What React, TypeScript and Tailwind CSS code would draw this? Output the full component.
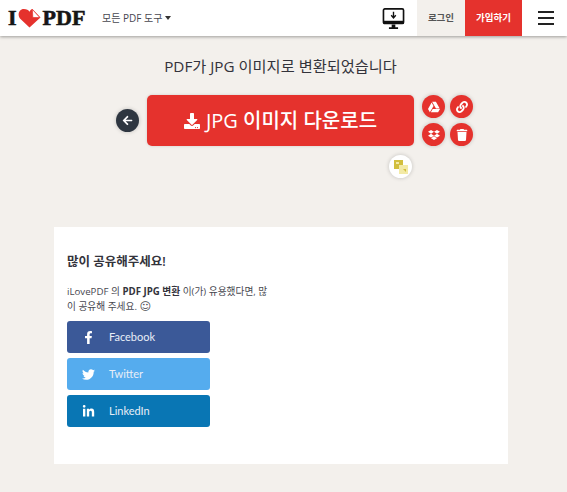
import { FaArrowLeft, FaDownload, FaDropbox, FaFacebookF, FaGoogleDrive, FaLink, FaLinkedinIn, FaTrash, FaTwitter } from "react-icons/fa";
import type { ReactNode } from "react";

const sans = "font-['Open_Sans','Noto_Sans_CJK_KR',sans-serif]";

function Logo() {
  return (
    <div className="flex w-[78px] items-center font-['Liberation_Serif',serif] text-[22px] font-bold leading-none text-[#161616] [-webkit-text-stroke:0.6px_#161616]">
      <span>I</span>
      <svg width="23" height="20" viewBox="0 0 24 21" className="ml-[1px] mr-[2px]">
        <path d="M12 20.5 L2 11 C-1 7 1 1 6 1 C9 1 11 2 12 4 C13 2 14 1 15 1 L23.5 10 L12 20.5 Z" fill="#e5322d" />
        <path d="M15 1.5 L22.8 10 L15.5 10 Z" fill="#fff" stroke="#e5322d" strokeWidth="0.7" />
      </svg>
      <span>PDF</span>
    </div>
  );
}

function RoundButton({ children, className }: { children: ReactNode; className: string }) {
  return (
    <div className={`flex h-[23px] w-[23px] items-center justify-center rounded-full text-white shadow-[0_0_4px_rgba(0,0,0,0.2)] ${className}`}>
      {children}
    </div>
  );
}

function ShareButton({ icon, label, className }: { icon: ReactNode; label: string; className: string }) {
  return (
    <div className={`flex h-[32px] w-[143px] items-center rounded-[3px] ${className}`}>
      <span className="flex w-[42px] justify-center text-[13px] text-white">{icon}</span>
      <span className="font-['Lato',sans-serif] text-[11px] text-[#e8eef7]">{label}</span>
    </div>
  );
}

export default function App() {
  return (
    <div className={`flex h-[492px] w-[567px] flex-col overflow-hidden bg-[#f3f0ec] ${sans}`}>
      <header className="flex h-[36px] shrink-0 items-center bg-white pl-[8px] shadow-[0_1px_3px_rgba(0,0,0,0.35)]">
        <Logo />
        <div className="ml-[16px] flex items-center gap-[3px] text-[10px] text-[#47474f]">
          <span>모든 PDF 도구</span>
          <span className="h-0 w-0 border-x-[3px] border-t-[4px] border-x-transparent border-t-[#333]" />
        </div>
        <svg width="23" height="21" viewBox="0 0 24 23" className="ml-auto mr-[12px]">
          <rect x="1" y="1" width="22" height="16" rx="1.5" fill="#fff" stroke="#111" strokeWidth="1.8" />
          <rect x="1" y="14" width="22" height="3.5" fill="#111" />
          <path d="M12 4 V10 M9.5 8 L12 10.8 L14.5 8" fill="none" stroke="#111" strokeWidth="1.5" />
          <path d="M10 18 H14 V21 H17 V23 H7 V21 H10 Z" fill="#111" />
        </svg>
        <div className="flex h-full w-[48px] items-center justify-center bg-[#f3f0ec] text-[9.5px] font-semibold text-[#555]">
          로그인
        </div>
        <div className="flex h-full w-[57px] items-center justify-center bg-[#e5322d] text-[9.5px] font-semibold text-white">
          가입하기
        </div>
        <div className="flex w-[45px] flex-col items-center gap-[4.5px] pl-[3px]">
          <span className="h-[1.5px] w-[16px] bg-[#222]" />
          <span className="h-[1.5px] w-[16px] bg-[#222]" />
          <span className="h-[1.5px] w-[16px] bg-[#222]" />
        </div>
      </header>

      <h1 className="mt-[19px] pr-[6px] text-center text-[15.25px] font-normal leading-[22px] text-[#33333b]">
        PDF가 JPG 이미지로 변환되었습니다
      </h1>

      <div className="ml-[116px] mt-[18px] flex items-center">
        <RoundButton className="bg-[#2e3640] text-[11px]">
          <FaArrowLeft />
        </RoundButton>
        <div className="ml-[8px] flex h-[51px] w-[267px] items-center justify-center gap-[6px] rounded-[5px] bg-[#e5322d] text-[20px] font-medium text-white shadow-[0_0_3px_rgba(0,0,0,0.15)]">
          <FaDownload className="text-[16px]" />
          <span>JPG 이미지 다운로드</span>
        </div>
        <div className="ml-[8px] grid grid-cols-2 gap-x-[5px] gap-y-[5px] text-[12px]">
          <RoundButton className="bg-[#e5322d]">
            <FaGoogleDrive />
          </RoundButton>
          <RoundButton className="bg-[#e5322d]">
            <FaLink />
          </RoundButton>
          <RoundButton className="bg-[#e5322d]">
            <FaDropbox />
          </RoundButton>
          <RoundButton className="bg-[#e5322d]">
            <FaTrash />
          </RoundButton>
        </div>
      </div>

      <div className="ml-[389px] mt-[9px]">
        <RoundButton className="bg-white">
          <svg width="14" height="14" viewBox="0 0 14 14">
            <rect x="0" y="0" width="9" height="9" fill="#d2bf3e" />
            <rect x="5" y="5" width="9" height="9" fill="#f3eaa6" />
            <rect x="2" y="2" width="3" height="2" fill="#f3eaa6" />
            <path d="M9 9 L12 9 L12 12 Z" fill="#d2bf3e" />
          </svg>
        </RoundButton>
      </div>

      <section className="ml-[54px] mt-[49px] h-[237px] w-[454px] bg-white pl-[13px] pt-[26px]">
        <h2 className="text-[12.5px] font-semibold leading-[18px] text-[#33333b]">많이 공유해주세요!</h2>
        <p className="mt-[13px] w-[208px] break-all text-[9.7px] leading-[15px] text-[#47474f]">
          iLovePDF 의 <b className="font-bold text-[#33333b]">PDF JPG 변환</b> 이(가) 유용했다면, 많이 공유해 주세요. <span className="font-['DejaVu_Sans',sans-serif] text-[11px] leading-none">☺</span>
        </p>
        <div className="mt-[7px] flex flex-col gap-[5px]">
          <ShareButton icon={<FaFacebookF />} label="Facebook" className="bg-[#3b5998]" />
          <ShareButton icon={<FaTwitter />} label="Twitter" className="bg-[#55acee]" />
          <ShareButton icon={<FaLinkedinIn />} label="LinkedIn" className="bg-[#0976b4]" />
        </div>
      </section>
    </div>
  );
}
